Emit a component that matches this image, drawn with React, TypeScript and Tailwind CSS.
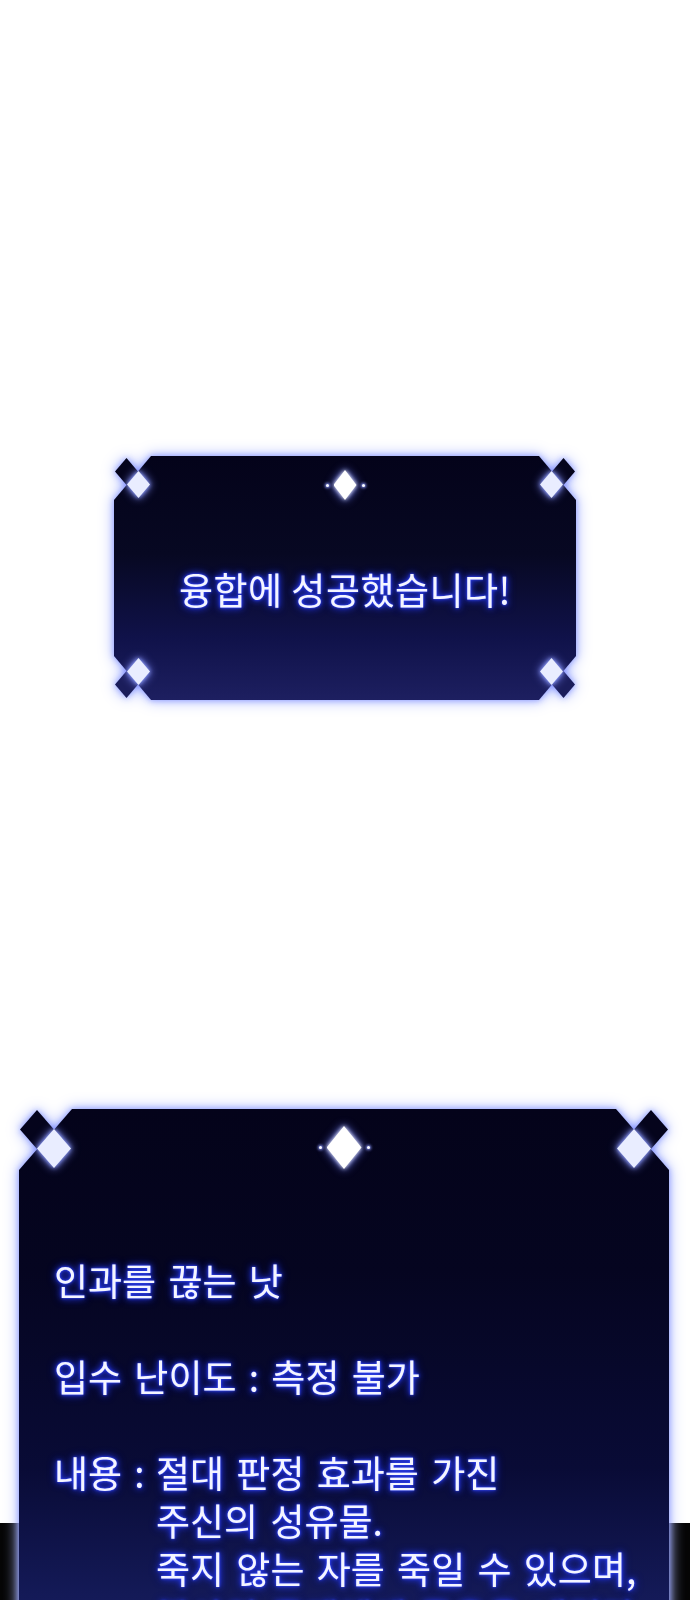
import React from "react";

const KR = "font-['Noto_Sans_CJK_KR','Noto_Sans',sans-serif]";
const GLOW_TEXT =
  "text-[#f4f5ff] [text-shadow:0_0_1px_#4a5cff,0_0_3px_#3346ff,0_0_6px_#2a3cff,0_0_10px_#1a2bd0]";
const RHOMBUS = "[clip-path:polygon(50%_0,100%_50%,50%_100%,0_50%)]";
const PANEL_GLOW = "[filter:drop-shadow(0_0_3px_#8c9aff)_drop-shadow(0_0_7px_#b4bfff)]";

function Dot() {
  return <div className="w-[3px] h-[3px] rounded-full bg-white shadow-[0_0_3px_1px_#8d9aff]" />;
}

function Ornament({ big }: { big?: boolean }) {
  return (
    <div className="flex items-center gap-[5px]">
      <Dot />
      <div className="[filter:drop-shadow(0_0_2px_#ffffff)_drop-shadow(0_0_4px_#6f7eff)]">
        <div
          className={
            big
              ? "w-[35px] h-[43px] bg-white " + RHOMBUS
              : "w-[23px] h-[30px] bg-white " + RHOMBUS
          }
        />
      </div>
      <Dot />
    </div>
  );
}

type Pos = "tl" | "tr" | "bl" | "br";

const POS: Record<Pos, string> = {
  tl: "left-0 top-0",
  tr: "right-0 top-0 scale-x-[-1]",
  bl: "left-0 bottom-0 scale-y-[-1]",
  br: "right-0 bottom-0 scale-x-[-1] scale-y-[-1]",
};

// Two-diamond checker motif sitting on each chamfered corner
function Corner({ big, pos, dark }: { big?: boolean; pos: Pos; dark: string }) {
  const box = big ? "w-[53px] h-[61px]" : "w-[37px] h-[44px]";
  const dia = big ? "w-[34px] h-[39px]" : "w-[23px] h-[27px]";
  const darkAt = big ? "left-[1px] top-[1px]" : "left-[1px] top-[2px]";
  const lightAt = big ? "left-[18px] top-[20px]" : "left-[13px] top-[15px]";
  return (
    <div className={"absolute " + box + " " + POS[pos]}>
      <div className={"absolute " + darkAt + " " + dia + " " + dark + " " + RHOMBUS} />
      <div
        className={
          "absolute " + lightAt + " [filter:drop-shadow(0_0_2px_#9aa8ff)_drop-shadow(0_0_4px_#7e8cff)]"
        }
      >
        <div className={dia + " bg-[#e9edff] " + RHOMBUS} />
      </div>
    </div>
  );
}

export default function App() {
  return (
    <div
      className={
        "relative h-[1600px] w-[690px] overflow-hidden pt-[456px] bg-[linear-gradient(to_bottom,#ffffff_0,#ffffff_1523px,#050505_1523px)] " +
        KR
      }
    >
      {/* fusion result notice */}
      <div className={"relative ml-[114px] w-[462px] h-[244px] " + PANEL_GLOW}>
        <div className="h-full flex flex-col items-center pt-[14px] bg-[linear-gradient(to_bottom,#04031a_0%,#070822_40%,#10124a_75%,#1d1f60_100%)] [clip-path:polygon(37px_0,calc(100%_-_37px)_0,100%_44px,100%_calc(100%_-_44px),calc(100%_-_37px)_100%,37px_100%,0_calc(100%_-_44px),0_44px)]">
          <Ornament />
          <p className={"mt-[65px] text-[37px] leading-[48px] tracking-[0.5px] " + GLOW_TEXT}>
            융합에 성공했습니다!
          </p>
        </div>
        <Corner pos="tl" dark="bg-[#05041c]" />
        <Corner pos="tr" dark="bg-[#05041c]" />
        <Corner pos="bl" dark="bg-[#1b1d5b]" />
        <Corner pos="br" dark="bg-[#1b1d5b]" />
      </div>

      {/* item description */}
      <div className={"relative mt-[409px] ml-[19px] w-[650px] h-[620px] " + PANEL_GLOW}>
        <div className="h-full flex flex-col items-center pt-[17px] bg-[linear-gradient(to_bottom,#04031a_0px,#050520_160px,#090b36_360px,#141a58_490px,#1a2062_620px)] [clip-path:polygon(53px_0,calc(100%_-_53px)_0,100%_61px,100%_calc(100%_-_61px),calc(100%_-_53px)_100%,53px_100%,0_calc(100%_-_61px),0_61px)]">
          <Ornament big />
          <div
            className={
              "self-stretch mt-[87px] pl-[35px] text-[37px] leading-[48px] [word-spacing:4px] " +
              GLOW_TEXT
            }
          >
            <p>인과를 끊는 낫</p>
            <div className="h-[48px]" />
            <p>입수 난이도 : 측정 불가</p>
            <div className="h-[48px]" />
            <div className="flex">
              <span className="w-[102px] shrink-0">내용 :</span>
              <div>
                <p>절대 판정 효과를 가진</p>
                <p>주신의 성유물.</p>
                <p>죽지 않는 자를 죽일 수 있으며,</p>
                <p>불사의 존재에게 죽음을 내린다.</p>
              </div>
            </div>
          </div>
        </div>
        <Corner big pos="tl" dark="bg-[#05041c]" />
        <Corner big pos="tr" dark="bg-[#05041c]" />
      </div>
    </div>
  );
}
